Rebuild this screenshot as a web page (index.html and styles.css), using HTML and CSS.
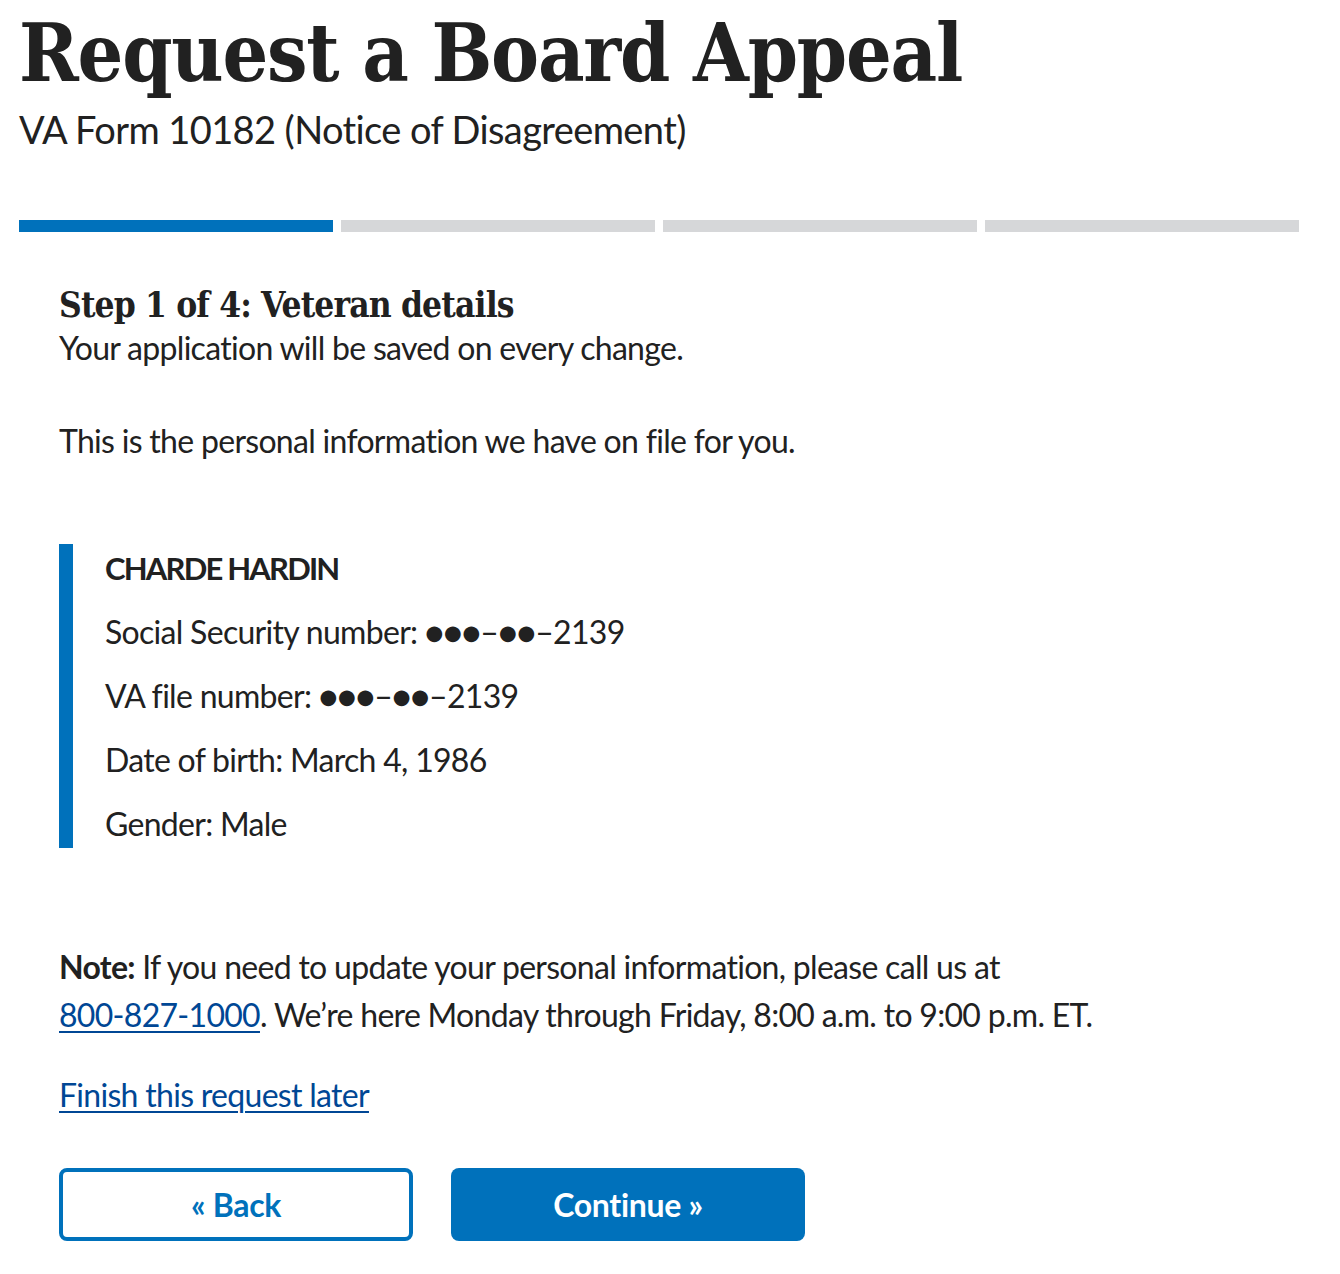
FILE: index.html
```html
<!DOCTYPE html>
<html lang="en">
<head>
<meta charset="utf-8">
<title>Request a Board Appeal</title>
<link rel="stylesheet" href="styles.css">
</head>
<body>
<div class="page">
  <h1 class="title">Request a Board Appeal</h1>
  <div class="subtitle">VA Form 10182 (Notice of Disagreement)</div>
  <div class="progress">
    <div class="seg seg-done"></div>
    <div class="seg"></div>
    <div class="seg"></div>
    <div class="seg"></div>
  </div>
  <div class="content">
    <h2 class="step">Step 1 of 4: Veteran details</h2>
    <p class="saved">Your application will be saved on every change.</p>
    <p class="intro">This is the personal information we have on file for you.</p>
    <div class="card">
      <p class="name">CHARDE HARDIN</p>
      <p class="row">Social Security number: ●●●–●●–2139</p>
      <p class="row">VA file number: ●●●–●●–2139</p>
      <p class="row">Date of birth: March 4, 1986</p>
      <p class="row">Gender: Male</p>
    </div>
    <p class="note"><strong>Note:</strong> If you need to update your personal information, please call us at <a href="#" class="link phone">800-827-1000</a>. We’re here Monday through Friday, 8:00 a.m. to 9:00 p.m. ET.</p>
    <p class="later"><a href="#" class="link">Finish this request later</a></p>
    <div class="actions">
      <button class="btn btn-outline" type="button">« Back</button>
      <button class="btn btn-primary" type="button">Continue »</button>
    </div>
  </div>
</div>
</body>
</html>
```
FILE: styles.css
```css
html, body {
  margin: 0;
  padding: 0;
  background: #fff;
}
body {
  font-family: Lato, "Open Sans", sans-serif;
  color: #212121;
}
.page {
  padding: 13px 41px 0 19px;
}
.title {
  font-family: "DejaVu Serif Condensed", "DejaVu Serif", serif;
  font-weight: bold;
  font-size: 80px;
  line-height: 80px;
  margin: 0;
  letter-spacing: -1.2px;
}
.subtitle {
  font-size: 38px;
  line-height: 48px;
  letter-spacing: -0.6px;
  margin-top: 12px;
}
.progress {
  display: flex;
  gap: 8px;
  margin-top: 67px;
}
.seg {
  flex: 1;
  height: 12px;
  background: #d6d7d9;
}
.seg-done {
  background: #0071bb;
}
.content {
  padding-left: 40px;
}
.step {
  font-family: "DejaVu Serif Condensed", "DejaVu Serif", serif;
  font-weight: bold;
  font-size: 35px;
  line-height: 38px;
  letter-spacing: -0.85px;
  margin: 54px 0 0;
}
.content p {
  font-size: 32px;
  line-height: 48px;
  letter-spacing: -0.7px;
  margin: 0;
}
.content .intro {
  margin-top: 45px;
}
.card {
  margin-top: 79px;
  border-left: 14px solid #0071bb;
  padding-left: 32px;
  display: flex;
  flex-direction: column;
  gap: 16px;
}
.content .name {
  font-weight: bold;
  font-size: 31px;
  letter-spacing: -1.8px;
}
.content .note {
  margin-top: 95px;
  max-width: 1080px;
}
.content .later {
  margin-top: 32px;
}
.link {
  color: #004795;
  text-decoration: underline;
  text-decoration-thickness: 2px;
  text-underline-offset: 4px;
}
.phone {
  white-space: nowrap;
}
.actions {
  display: flex;
  gap: 38px;
  margin-top: 49px;
}
.btn {
  width: 354px;
  height: 73px;
  border-radius: 8px;
  font-family: Lato, "Open Sans", sans-serif;
  font-weight: bold;
  font-size: 32px;
  letter-spacing: -0.3px;
  display: flex;
  align-items: center;
  justify-content: center;
  cursor: pointer;
}
.btn-outline {
  background: #fff;
  color: #0071bb;
  border: 4px solid #0071bb;
}
.btn-primary {
  background: #0071bb;
  color: #fff;
  border: 0;
}
```
